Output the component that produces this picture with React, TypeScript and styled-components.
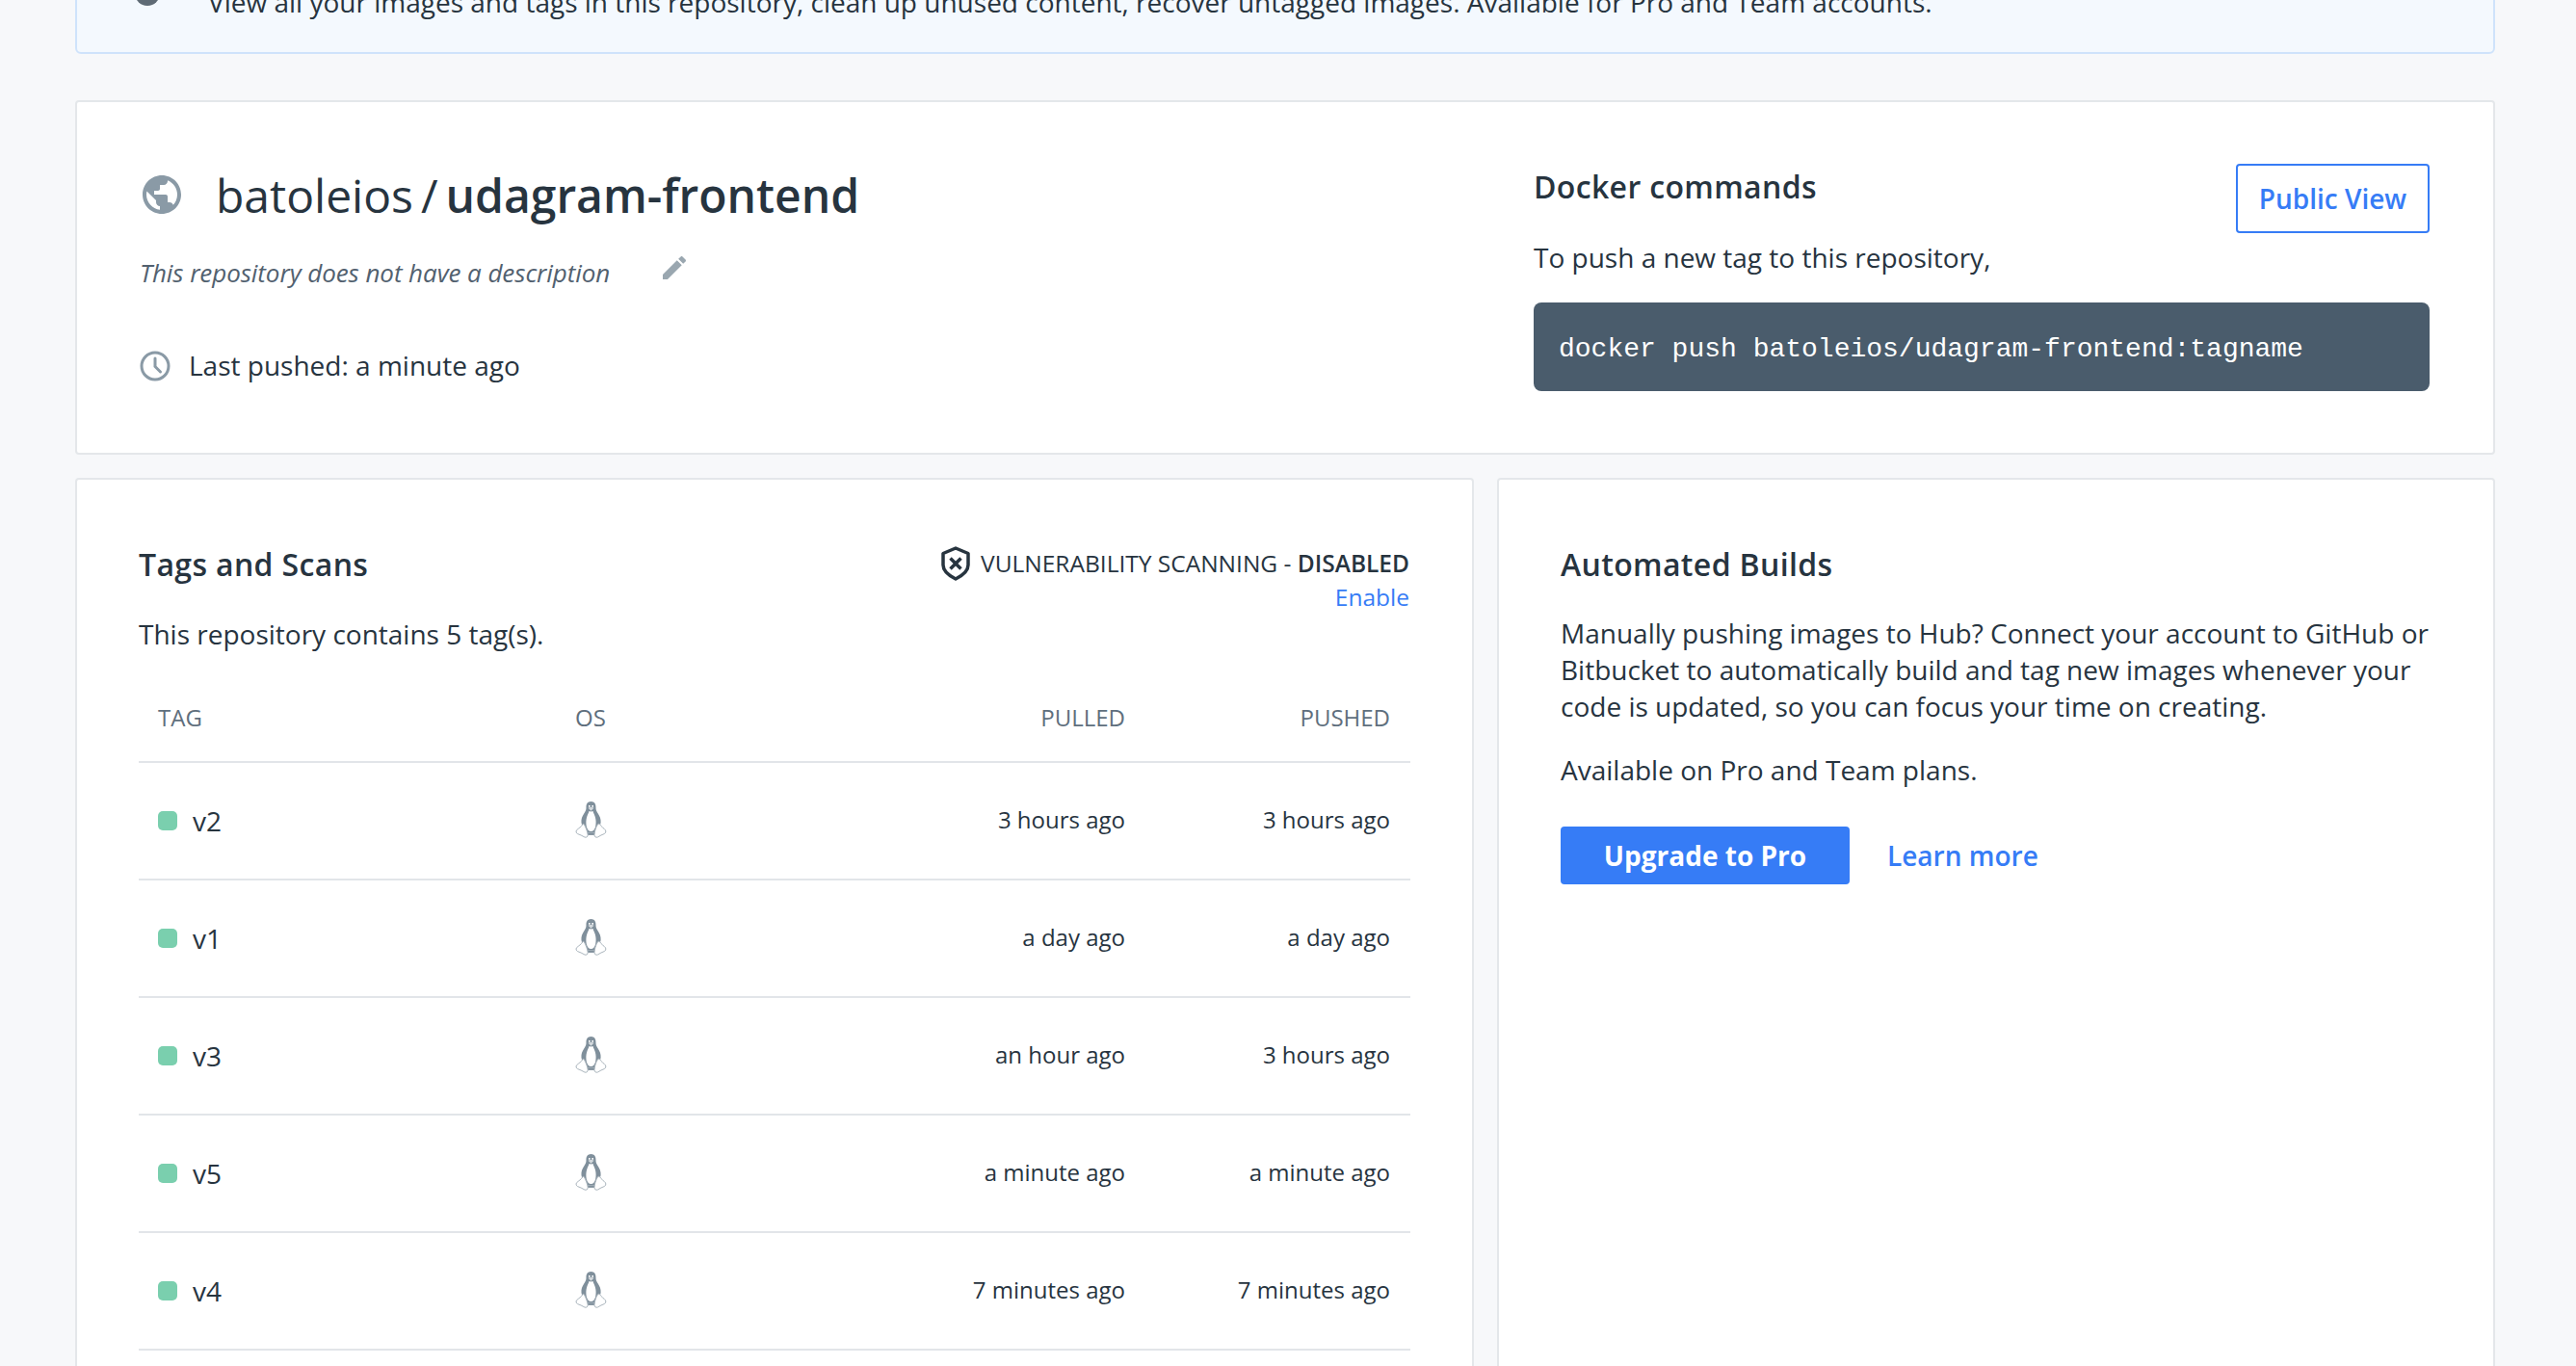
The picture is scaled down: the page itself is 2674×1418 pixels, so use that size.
import React from 'react';
import styled, { createGlobalStyle } from 'styled-components';

const GlobalStyle = createGlobalStyle`
  html, body {
    margin: 0;
    height: 100%;
    overflow: hidden;
    background: #f7f8fa;
  }
  body {
    font-family: "Open Sans", "Liberation Sans", sans-serif;
    font-size: 28px;
    color: #27343f;
  }
`;

const Page = styled.div`
  height: 1418px;
  overflow: hidden;
  padding: 0 84px 0 78px;
  box-sizing: border-box;
`;

const Banner = styled.div`
  margin-top: -60px;
  height: 116px;
  box-sizing: border-box;
  display: flex;
  align-items: flex-start;
  padding: 41px 0 0 60px;
  gap: 50px;
  background: #f4f9fe;
  border: 2px solid #cfe3fb;
  border-radius: 6px;
`;

const BannerIcon = styled.span`
  width: 26px;
  height: 26px;
  margin-top: -3px;
  border-radius: 50%;
  background: #5f6b75;
`;

const BannerText = styled.span`
  line-height: 38px;
  color: #27343f;
`;

const Card = styled.section`
  background: #fff;
  border: 2px solid #e4e7ea;
  border-radius: 4px;
  box-sizing: border-box;
`;

const RepoCard = styled(Card)`
  margin-top: 48px;
  height: 368px;
  display: flex;
  justify-content: space-between;
  padding: 64px 66px 0 65px;
`;

const RepoInfo = styled.div`
  display: flex;
  flex-direction: column;
`;

const RepoTitle = styled.h1`
  margin: 0;
  display: flex;
  align-items: center;
  height: 64px;
  font-size: 48px;
  font-weight: 400;
  color: #27343f;
`;

const TitleIcon = styled.svg`
  width: 48px;
  height: 48px;
  margin: 0 32px 0 -1px;
  fill: #8a9aa6;
`;

const Slash = styled.span`
  margin: 0 8px 0 8px;
`;

const RepoName = styled.strong`
  font-weight: 600;
`;

const DescriptionRow = styled.div`
  display: flex;
  align-items: flex-start;
  margin-top: 27px;
  height: 44px;
`;

const Description = styled.em`
  font-size: 26px;
  letter-spacing: -0.07px;
  line-height: 44px;
  color: #52616f;
`;

const EditIcon = styled.svg`
  width: 32px;
  height: 32px;
  margin: 1px 0 0 51px;
  fill: #9aa7b0;
`;

const PushedRow = styled.div`
  display: flex;
  align-items: center;
  margin-top: 55px;
  gap: 19px;
  line-height: 38px;
`;

const ClockIcon = styled.svg`
  width: 32px;
  height: 32px;
  margin-top: 1px;
  fill: none;
  stroke: #8a9aa6;
  stroke-width: 3;
  stroke-linecap: round;
`;

const Commands = styled.div`
  width: 930px;
  display: flex;
  flex-direction: column;
`;

const CommandsHead = styled.div`
  display: flex;
  justify-content: space-between;
  align-items: flex-start;
`;

const Heading = styled.h2`
  margin: 0;
  font-size: 32px;
  letter-spacing: 0.35px;
  line-height: 44px;
  font-weight: 600;
  color: #27343f;
`;

const DockerHeading = styled(Heading)`
  margin-top: 2px;
`;

const OutlineButton = styled.button`
  width: 201px;
  height: 72px;
  box-sizing: border-box;
  background: #fff;
  border: 2px solid #367cf6;
  border-radius: 4px;
  color: #367cf6;
  font-family: inherit;
  font-size: 28px;
  font-weight: 600;
`;

const PushHint = styled.p`
  margin: 6px 0 0;
  line-height: 38px;
`;

const CommandBox = styled.div`
  margin-top: 28px;
  height: 92px;
  padding: 4px 26px 0;
  display: flex;
  align-items: center;
  box-sizing: border-box;
  background: #4a5c6c;
  border-radius: 8px;
  color: #fff;
  font-family: "Liberation Mono", "Courier New", monospace;
  font-size: 28px;
`;

const Columns = styled.div`
  margin-top: 24px;
  display: grid;
  grid-template-columns: 1452px 1036px;
  gap: 24px;
`;

const TagsCard = styled(Card)`
  height: 1100px;
  padding: 66px 64px 0 64px;
`;

const TagsHead = styled.div`
  display: flex;
  justify-content: space-between;
  align-items: flex-start;
`;

const ScanBlock = styled.div`
  display: flex;
  flex-direction: column;
  align-items: flex-end;
  margin: 3px 1px 0 0;
  font-size: 24.5px;
`;

const ScanLine = styled.div`
  display: flex;
  align-items: center;
  gap: 10px;
  line-height: 36px;
`;

const ScanState = styled.strong`
  font-weight: 600;
`;

const ShieldIcon = styled.svg`
  width: 32px;
  height: 36px;
  fill: none;
  stroke: #27343f;
`;

const EnableLink = styled.a`
  color: #367cf6;
  line-height: 33px;
`;

const RepoCount = styled.p`
  margin: 3px 0 0;
  line-height: 38px;
`;

const Row = styled.div<{ $head?: boolean }>`
  display: grid;
  grid-template-columns: 410px 78px 516px 275px;
  padding: 0 22px 0 20px;
  align-items: center;
  height: ${p => (p.$head ? '93px' : '122px')};
  box-sizing: border-box;
  border-bottom: 2px solid #e2e5e9;
  font-size: 24px;
  color: ${p => (p.$head ? '#5f6f7d' : '#27343f')};
`;

const TagTable = styled.div`
  margin-top: 22px;
`;

const Centered = styled.div`
  display: flex;
  justify-content: center;
`;

const RightCell = styled.div`
  text-align: right;
`;

const TimeCell = styled(RightCell)`
  padding-bottom: 4px;
`;

const TagCell = styled.div`
  display: flex;
  align-items: center;
  gap: 16px;
  font-size: 28px;
`;

const StatusDot = styled.span`
  width: 20px;
  height: 20px;
  border-radius: 5px;
  background: #7acfae;
`;

const TuxSvg = styled.svg`
  width: 33px;
  height: 40px;
  margin-top: -2px;
`;

const BuildsCard = styled(Card)`
  height: 1100px;
  padding: 66px 64px 0 64px;
`;

const BuildsLead = styled.p`
  margin: 30px 0 0;
  line-height: 38px;
`;

const BuildsNote = styled(BuildsLead)`
  margin-top: 28px;
`;

const BuildsActions = styled.div`
  margin-top: 40px;
  display: flex;
  align-items: center;
  gap: 39px;
`;

const PrimaryButton = styled.button`
  width: 300px;
  height: 60px;
  background: #367cf6;
  color: #fff;
  border: none;
  border-radius: 4px;
  font-family: inherit;
  font-size: 28px;
  font-weight: 700;
`;

const LearnLink = styled.a`
  color: #367cf6;
  font-weight: 600;
`;

const Tux = () => (
  <TuxSvg viewBox="0 0 33 40">
    <path
      d="M16.500 1c-3.600 0-5.200 2.800-5 6.200.1 2.400-.8 4-2.400 6.500-1.600 2.500-3 5.300-2.600 9.300l1.600 6.500 4.400 4h8l4.400-4 1.700-6.500c.3-4-1.100-6.800-2.700-9.300-1.600-2.500-2.500-4.100-2.400-6.500.2-3.400-1.400-6.200-5-6.200z"
      fill="#7f8f9b"
    />
    <path
      d="M14.500 11c1 .6 3 .6 4 0 .5 2 1.500 3.500 2.300 6 1 3 1 7 .4 10-.8 3-2.400 5-4.700 5s-3.900-2-4.700-5c-.6-3-.6-7 .4-10 .8-2.500 1.800-4 2.300-6z"
      fill="#fff"
    />
    <path d="M13.500 7.800c1-1 5-1 6 0l-3 3z" fill="#d5dade" />
    <path d="M14 5h1.600v1.800H14zM17.400 5H19v1.800h-1.600z" fill="#fff" />
    <path d="M13 33.500h7.400v2.400H13z" fill="#7f8f9b" />
    <path
      d="M8 24.500c-1.600 2.700-4.200 4.200-6.500 6.300-.8 1.500-.4 3 .9 3.700 2.400.9 5 2 7.500 3.500 1.800.7 3.200-.3 3.300-2.300-.4-3.700-2-7.300-3.700-10.700-.5-.7-1-.8-1.500-.5zM25.500 24.500c1.500 2.700 4.400 4.200 6 6.300.7 1.600.1 3-1.100 3.700-2.200.9-4.700 2-7 3.500-1.800.7-3.300-.3-3.400-2.300.3-3.700 1.300-7.300 3.300-10.700.7-1 1.500-1 2.200-.5z"
      fill="#fff"
      stroke="#a9b4bc"
      strokeWidth="1"
    />
  </TuxSvg>
);

const tags = [
  { tag: 'v2', pulled: '3 hours ago', pushed: '3 hours ago' },
  { tag: 'v1', pulled: 'a day ago', pushed: 'a day ago' },
  { tag: 'v3', pulled: 'an hour ago', pushed: '3 hours ago' },
  { tag: 'v5', pulled: 'a minute ago', pushed: 'a minute ago' },
  { tag: 'v4', pulled: '7 minutes ago', pushed: '7 minutes ago' },
];

export default function App() {
  return (
    <Page>
      <GlobalStyle />
      <Banner>
        <BannerIcon />
        <BannerText>
          View all your images and tags in this repository, clean up unused content, recover untagged images. Available
          for Pro and Team accounts.
        </BannerText>
      </Banner>

      <RepoCard>
        <RepoInfo>
          <RepoTitle>
            <TitleIcon viewBox="0 0 24 24">
              <path d="M12 2C6.480 2 2 6.480 2 12s4.480 10 10 10 10-4.480 10-10S17.520 2 12 2zm-1 17.930c-3.950-.490-7-3.850-7-7.930 0-.620.080-1.210.210-1.790L9 15v1c0 1.100.900 2 2 2v1.930zm6.900-2.540c-.260-.810-1-1.390-1.900-1.390h-1v-3c0-.550-.450-1-1-1H8v-2h2c.550 0 1-.450 1-1V7h2c1.100 0 2-.900 2-2v-.410c2.930 1.190 5 4.060 5 7.410 0 2.080-.800 3.970-2.100 5.390z" />
            </TitleIcon>
            batoleios
            <Slash>/</Slash>
            <RepoName>udagram-frontend</RepoName>
          </RepoTitle>
          <DescriptionRow>
            <Description>This repository does not have a description</Description>
            <EditIcon viewBox="0 0 24 24">
              <path d="M3 17.250V21h3.750L17.810 9.940l-3.750-3.750L3 17.250zM20.710 7.040c.390-.390.390-1.020 0-1.410l-2.340-2.340c-.390-.390-1.020-.390-1.410 0l-1.830 1.830 3.750 3.750 1.830-1.830z" />
            </EditIcon>
          </DescriptionRow>
          <PushedRow>
            <ClockIcon viewBox="0 0 32 32">
              <circle cx="16" cy="16" r="14" />
              <path d="M16 8v8.500l5.500 5.500" />
            </ClockIcon>
            Last pushed: a minute ago
          </PushedRow>
        </RepoInfo>
        <Commands>
          <CommandsHead>
            <DockerHeading>Docker commands</DockerHeading>
            <OutlineButton>Public View</OutlineButton>
          </CommandsHead>
          <PushHint>To push a new tag to this repository,</PushHint>
          <CommandBox>docker push batoleios/udagram-frontend:tagname</CommandBox>
        </Commands>
      </RepoCard>

      <Columns>
        <TagsCard>
          <TagsHead>
            <Heading>Tags and Scans</Heading>
            <ScanBlock>
              <ScanLine>
                <ShieldIcon viewBox="0 0 32 36">
                  <path
                    d="M16 2l13 5.500v12c0 6-6 11-13 14.500-7-3.500-13-8.500-13-14.500v-12z"
                    strokeWidth="3.500"
                    strokeLinejoin="round"
                  />
                  <path d="M10.500 12.500l11 11M21.500 12.500l-11 11" strokeWidth="3.500" />
                </ShieldIcon>
                <span>
                  VULNERABILITY SCANNING - <ScanState>DISABLED</ScanState>
                </span>
              </ScanLine>
              <EnableLink>Enable</EnableLink>
            </ScanBlock>
          </TagsHead>
          <RepoCount>This repository contains 5 tag(s).</RepoCount>
          <TagTable>
            <Row $head>
              <div>TAG</div>
              <Centered>OS</Centered>
              <RightCell>PULLED</RightCell>
              <RightCell>PUSHED</RightCell>
            </Row>
            {tags.map(t => (
              <Row key={t.tag}>
                <TagCell>
                  <StatusDot />
                  {t.tag}
                </TagCell>
                <Centered>
                  <Tux />
                </Centered>
                <TimeCell>{t.pulled}</TimeCell>
                <TimeCell>{t.pushed}</TimeCell>
              </Row>
            ))}
          </TagTable>
        </TagsCard>

        <BuildsCard>
          <Heading>Automated Builds</Heading>
          <BuildsLead>
            Manually pushing images to Hub? Connect your account to GitHub or Bitbucket to automatically build and tag
            new images whenever your code is updated, so you can focus your time on creating.
          </BuildsLead>
          <BuildsNote>Available on Pro and Team plans.</BuildsNote>
          <BuildsActions>
            <PrimaryButton>Upgrade to Pro</PrimaryButton>
            <LearnLink>Learn more</LearnLink>
          </BuildsActions>
        </BuildsCard>
      </Columns>
    </Page>
  );
}
